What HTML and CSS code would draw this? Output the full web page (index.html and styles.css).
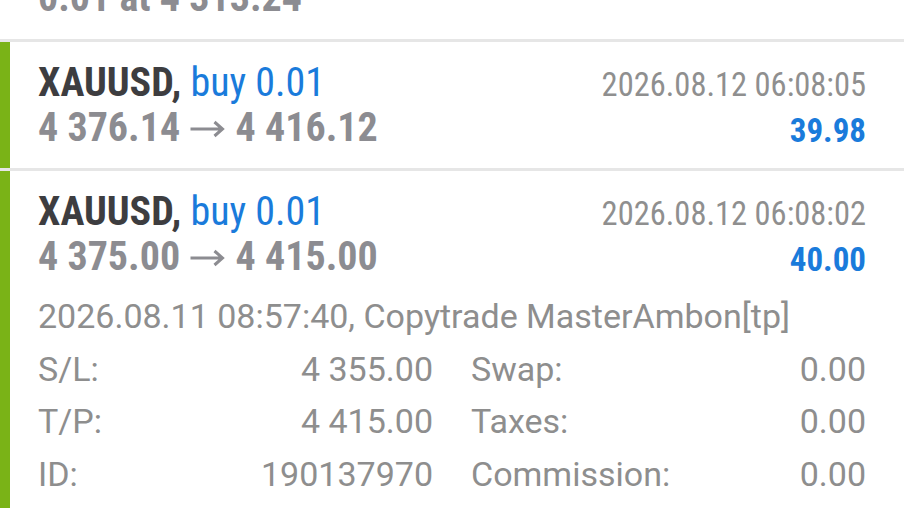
FILE: index.html
```html
<!DOCTYPE html>
<html lang="en">

<head>
    <meta charset="UTF-8">
    <meta name="viewport" content="width=device-width, initial-scale=1.0">
    <title>History</title>
    <link rel="stylesheet" href="styles.css">
</head>

<body>
    <div class="history">
        <div class="prev">0.01 at 4 313.24</div>

        <div class="deal">
            <div class="deal-main">
                <div class="deal-left">
                    <div class="title"><span class="symbol">XAUUSD,</span> <span class="type">buy 0.01</span></div>
                    <div class="prices">4 376.14 <svg class="arrow" viewBox="0 0 36 20"><path d="M1 10H33M25 3L33 10L25 17" /></svg> 4 416.12</div>
                </div>
                <div class="deal-right">
                    <div class="time">2026.08.12 06:08:05</div>
                    <div class="profit">39.98</div>
                </div>
            </div>
        </div>

        <div class="deal">
            <div class="deal-main">
                <div class="deal-left">
                    <div class="title"><span class="symbol">XAUUSD,</span> <span class="type">buy 0.01</span></div>
                    <div class="prices">4 375.00 <svg class="arrow" viewBox="0 0 36 20"><path d="M1 10H33M25 3L33 10L25 17" /></svg> 4 415.00</div>
                </div>
                <div class="deal-right">
                    <div class="time">2026.08.12 06:08:02</div>
                    <div class="profit">40.00</div>
                </div>
            </div>
            <div class="details">
                <div class="open-info">2026.08.11 08:57:40, Copytrade MasterAmbon[tp]</div>
                <div class="detail-grid">
                    <div class="field"><span>S/L:</span><span>4 355.00</span></div>
                    <div class="field"><span>Swap:</span><span>0.00</span></div>
                    <div class="field"><span>T/P:</span><span>4 415.00</span></div>
                    <div class="field"><span>Taxes:</span><span>0.00</span></div>
                    <div class="field"><span>ID:</span><span>190137970</span></div>
                    <div class="field"><span>Commission:</span><span>0.00</span></div>
                </div>
            </div>
        </div>
    </div>
</body>

</html>
```
FILE: styles.css
```css
body {
    margin: 0;
    padding: 0;
    background-color: #fff;
    font-family: "Roboto Condensed", Roboto, sans-serif;
    overflow: hidden;
}

.history {
    width: 904px;
}

.prev {
    margin-top: -25px;
    padding: 0 38px 19px 38px;
    font-size: 40px;
    line-height: 45px;
    font-weight: bold;
    color: #8c8c91;
}

.deal {
    border-top: 3px solid #e6e6e6;
    padding: 18px 38px 18px 38px;
    background: linear-gradient(to right, #7ab317 10px, #fff 10px);
}

.deal-main {
    display: flex;
    justify-content: space-between;
}

.title,
.prices {
    font-size: 40px;
    line-height: 45px;
    font-weight: bold;
}

.symbol {
    color: #3d3d40;
}

.type {
    color: #1a7bdb;
    font-weight: normal;
}

.prices {
    color: #8c8c91;
}

.arrow {
    width: 37px;
    height: 20px;
    vertical-align: 2px;
    fill: none;
    stroke: #8c8c91;
    stroke-width: 3;
}

.deal-right {
    text-align: right;
    padding-top: 3px;
    margin-bottom: -3px;
}

.time,
.profit {
    line-height: 45px;
}

.time {
    font-size: 32.5px;
    color: #8f8f8f;
}

.profit {
    font-size: 33px;
    color: #1a7bdb;
    font-weight: bold;
}

.details {
    margin-top: 11px;
    font-family: Roboto, sans-serif;
    font-size: 34px;
    line-height: 52.5px;
    color: #8e8e8e;
}

.detail-grid {
    display: grid;
    grid-template-columns: 1fr 1fr;
    column-gap: 38px;
}

.field {
    display: flex;
    justify-content: space-between;
}
```
